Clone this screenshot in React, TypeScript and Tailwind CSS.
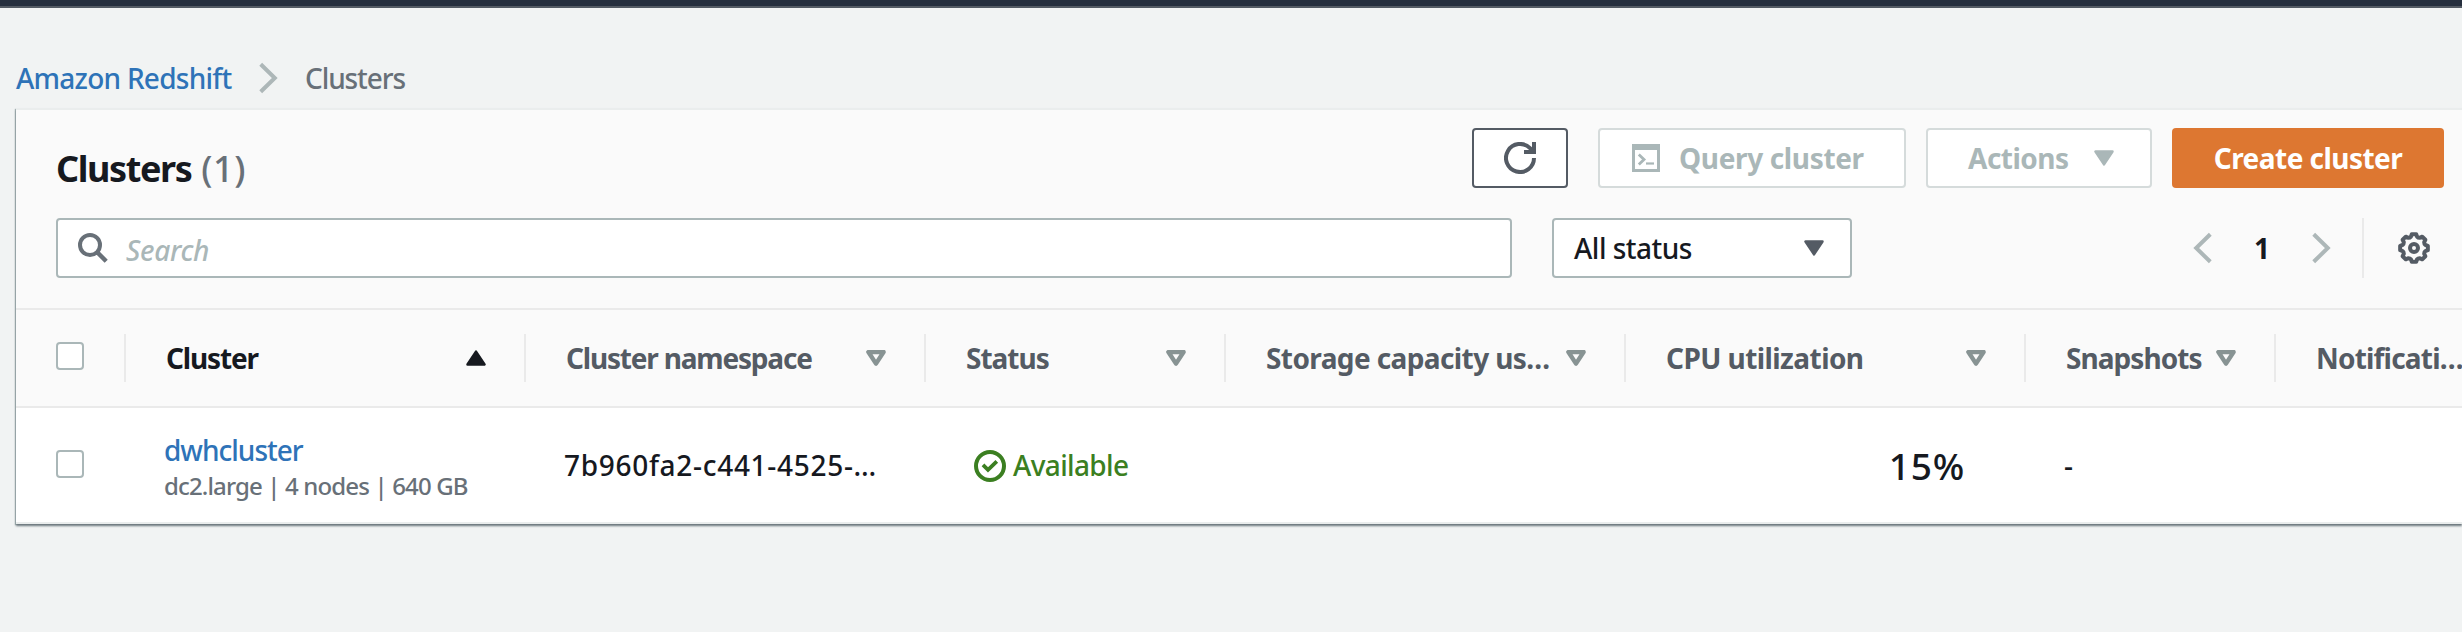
import React from 'react';

function Chevron({ flip = false }: { flip?: boolean }) {
  return (
    <svg width="19" height="32" viewBox="0 0 19 32" className={flip ? 'shrink-0 -scale-x-100' : 'shrink-0'}>
      <path d="M1.7 2.2 15.8 16 1.7 29.8" fill="none" stroke="#adb7b8" strokeWidth="4" />
    </svg>
  );
}

function SolidCaret({ className = '' }: { className?: string }) {
  return (
    <svg width="20" height="16" viewBox="0 0 20 16" className={`shrink-0 ${className}`}>
      <path d="M1.5 1.5h17L10 14.4Z" fill="currentColor" stroke="currentColor" strokeWidth="2.5" strokeLinejoin="round" />
    </svg>
  );
}

function SortCaret() {
  return (
    <svg width="20" height="16" viewBox="0 0 20 16" className="shrink-0 text-[#879393]">
      <path d="M2.4 2h15.2L10 13.6Z" fill="none" stroke="currentColor" strokeWidth="4.4" strokeLinejoin="round" />
    </svg>
  );
}

function RefreshIcon() {
  return (
    <svg width="32" height="32" viewBox="0 0 32 32" fill="none" stroke="#545b64" strokeWidth="4">
      <path d="M30 0v10H20" />
      <path d="M30 16A14 14 0 1 1 26 6.2L29.5 9.7" />
    </svg>
  );
}

function ConsoleIcon() {
  return (
    <svg width="28" height="28" viewBox="0 0 28 28" fill="none" stroke="currentColor">
      <path d="M0 0h28v28H0ZM3 6v19h22V6Z" fill="currentColor" fillRule="evenodd" stroke="none" />
      <path d="M6.8 10.6 12 15.5l-5.2 4.9" strokeWidth="2.8" />
      <path d="M14 19.5h8" strokeWidth="2.2" />
    </svg>
  );
}

function SearchIcon() {
  return (
    <svg width="30" height="30" viewBox="0 0 30 30" fill="none" stroke="#687078" strokeWidth="4">
      <circle cx="12" cy="12" r="10" />
      <path d="m19 19 9.2 9.2" strokeWidth="4.4" />
    </svg>
  );
}

const gearPath =
  Array.from({ length: 8 }, (_, i) => {
    const at = (r: number, deg: number) => {
      const a = ((i * 45 + deg - 90) * Math.PI) / 180;
      return `${(16 + r * Math.cos(a)).toFixed(2)} ${(16 + r * Math.sin(a)).toFixed(2)}`;
    };
    return `${i ? 'L' : 'M'}${at(14, -9)}L${at(14, 9)}L${at(11.8, 15)}Q${at(10.9, 22.5)} ${at(11.8, 30)}`;
  }).join('') + 'Z';

function GearIcon() {
  return (
    <svg width="32" height="32" viewBox="0 0 32 32" fill="none" stroke="#545b64" strokeWidth="4">
      <path d={gearPath} strokeLinejoin="round" />
      <circle cx="16" cy="16" r="4" />
    </svg>
  );
}

function AvailableIcon() {
  return (
    <svg width="32" height="32" viewBox="0 0 32 32" fill="none" stroke="currentColor" strokeWidth="4">
      <circle cx="16" cy="16" r="14" />
      <path d="m9 14.8 5 5 8.8-8.4" strokeWidth="3.8" />
    </svg>
  );
}

function Checkbox() {
  return <span className="block size-7 rounded-[4px] border-2 border-[#aab7b8] bg-white" />;
}

const columns = [
  { label: 'Cluster', width: 'w-[400px]', spacing: 'tracking-[-1.17px]', sorted: true },
  { label: 'Cluster namespace', width: 'w-[400px]', spacing: 'tracking-[-1.19px]' },
  { label: 'Status', width: 'w-[300px]', spacing: 'tracking-[-1px]' },
  { label: 'Storage capacity us…', width: 'w-[400px]', spacing: 'tracking-[-0.6px]' },
  { label: 'CPU utilization', width: 'w-[400px]', spacing: 'tracking-[-0.57px]' },
  { label: 'Snapshots', width: 'w-[250px]', spacing: 'tracking-[-0.95px]' },
  { label: 'Notificati…', width: 'w-[250px]', spacing: 'tracking-[-0.8px]' },
];

export default function App() {
  return (
    <div className="h-[632px] w-full overflow-hidden bg-[#f1f3f3] font-['Noto_Sans',sans-serif] text-[28px] font-medium whitespace-nowrap text-[#16191f]">
      <div className="h-2 border-b-2 border-[#545b64] bg-[#262f3e]" />

      <nav className="flex h-[100px] items-center pt-[40px] pl-4">
        <a className="w-[243px] pb-px tracking-[-0.75px] text-[#2e73b8]">Amazon Redshift</a>
        <Chevron />
        <span className="pb-px pl-[27px] tracking-[-1.1px] text-[#687078]">Clusters</span>
      </nav>

      <main className="ml-4 h-[416px] border-y-2 border-[#eaeded] bg-white shadow-[0_2px_2px_0_#6f7a80,-1px_1px_1px_0_#aab7b8]">
        <section className="h-[200px] border-b-2 border-[#eaeaea] bg-[#fafafa] pt-[18px] pl-10">
          <div className="flex h-[60px] items-start pr-[18px]">
            <h1 className="mt-[11px] flex-1 text-[36px] leading-[60px] font-bold tracking-[-1.4px]">
              Clusters <span className="ml-[2px] font-medium tracking-[0.5px] text-[#687078]">(1)</span>
            </h1>
            <button className="flex h-[60px] w-24 items-center justify-center rounded-[4px] border-2 border-[#545b64] bg-white">
              <RefreshIcon />
            </button>
            <button className="ml-[30px] flex h-[60px] w-[308px] items-center rounded-[4px] border-2 border-[#d5dbdb] bg-white pl-8 font-bold tracking-[-0.35px] text-[#aab7b8]">
              <ConsoleIcon />
              <span className="pb-px pl-[19px]">Query cluster</span>
            </button>
            <button className="ml-[20px] flex h-[60px] w-[226px] items-center rounded-[4px] border-2 border-[#d5dbdb] bg-white pl-10 font-bold tracking-[-0.5px] text-[#aab7b8]">
              <span className="w-[126px] pb-px text-left">Actions</span>
              <SolidCaret />
            </button>
            <button className="ml-[20px] h-[60px] w-[272px] rounded-[4px] bg-[#dd7731] pb-px font-bold tracking-[-0.54px] text-white">
              Create cluster
            </button>
          </div>

          <div className="mt-[30px] flex h-[60px] items-center pr-8">
            <div className="flex h-[60px] w-[1456px] items-center rounded-[4px] border-2 border-[#aab7b8] bg-white pl-5">
              <SearchIcon />
              <span className="pt-[3px] pl-[18px] tracking-[-0.3px] text-[#aab7b8] italic">Search</span>
            </div>
            <div className="ml-10 flex h-[60px] w-[300px] items-center justify-between rounded-[4px] border-2 border-[#aab7b8] bg-white pr-[26px] pl-5">
              <span className="pb-px tracking-[-0.5px]">All status</span>
              <SolidCaret className="text-[#545b64]" />
            </div>
            <div className="ml-auto flex h-[60px] items-center">
              <Chevron flip />
              <span className="w-[100px] pb-px text-center font-bold">1</span>
              <Chevron />
              <span className="ml-[31px] h-[60px] w-[2px] bg-[#eaeaea]" />
              <span className="ml-[34px]">
                <GearIcon />
              </span>
            </div>
          </div>
        </section>

        <div className="overflow-hidden">
          <div className="flex h-[98px] w-[2510px] items-center border-b-2 border-[#eaeaea] bg-[#fafafa]">
            <div className="flex h-12 w-[110px] items-center border-r-2 border-[#eaeaea] pb-1 pl-10">
              <Checkbox />
            </div>
            {columns.map((c) => (
              <div key={c.label} className={`flex h-12 items-center justify-between border-r-2 border-[#eaeaea] pr-[38px] pl-10 ${c.width}`}>
                <span className={`pb-px font-bold ${c.spacing} ${c.sorted ? '' : 'text-[#545b64]'}`}>{c.label}</span>
                {c.sorted ? <SolidCaret className="rotate-180" /> : <SortCaret />}
              </div>
            ))}
          </div>
          <div className="flex h-[114px] w-[2510px] items-center">
            <div className="w-[110px] pb-[2px] pl-10">
              <Checkbox />
            </div>
            <div className="w-[400px] pt-[5px] pl-[38px] leading-9">
              <div className="tracking-[-1px] text-[#2e73b8]">dwhcluster</div>
              <div className="text-[24px] leading-9 tracking-[-0.86px] text-[#687078]">dc2.large | 4 nodes | 640 GB</div>
            </div>
            <div className="w-[400px] pl-[38px] tracking-[0.7px]">7b960fa2-c441-4525-…</div>
            <div className="flex w-[300px] items-center pl-12 tracking-[-0.65px] text-[#3b7f21]">
              <span className="pt-[2px]">
                <AvailableIcon />
              </span>
              <span className="pl-[7px]">Available</span>
            </div>
            <div className="w-[400px]" />
            <div className="w-[400px] pt-[2px] pr-[61px] text-right text-[37px] tracking-[0.8px]">15%</div>
            <div className="w-[250px] pl-[38px]">-</div>
          </div>
        </div>
      </main>
    </div>
  );
}
